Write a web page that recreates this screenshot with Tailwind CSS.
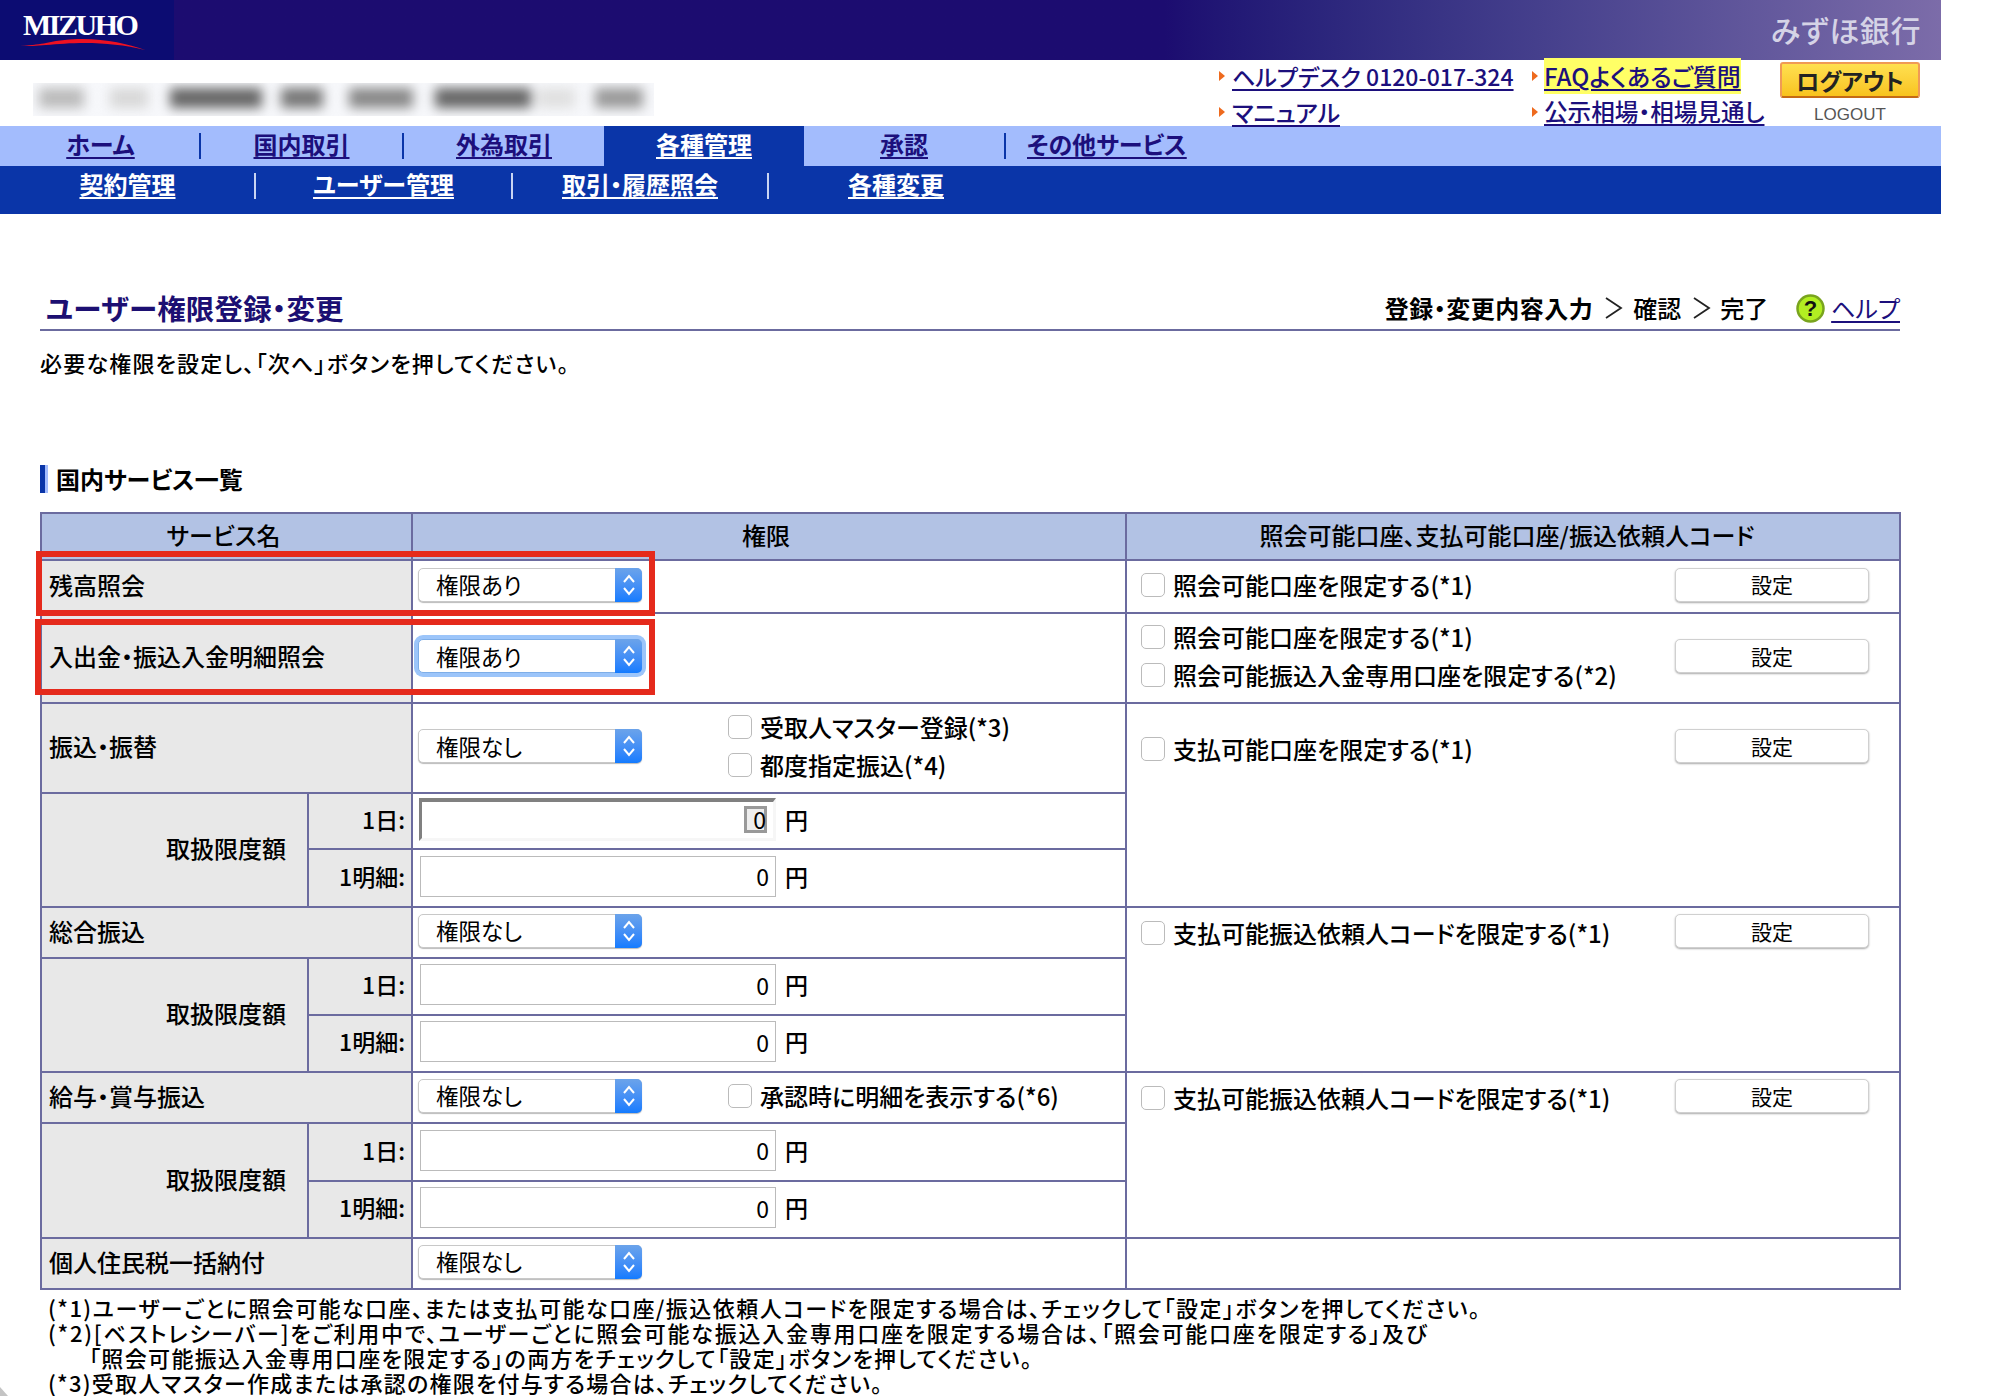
<!DOCTYPE html>
<html lang="ja">
<head>
<meta charset="UTF-8">
<title>ユーザー権限登録・変更</title>
<script src="https://cdn.jsdelivr.net/npm/@tailwindcss/browser@4"></script>
</head>
<body class="bg-white w-[1994px] h-[1396px] overflow-hidden relative font-['Noto_Sans_CJK_JP','Noto_Sans',sans-serif] [font-feature-settings:'palt'] text-[22px] text-[#000]">

<!-- header -->
<div class="w-[1941px] h-[60px] flex items-center bg-gradient-to-r from-[#1c0c70] from-60% to-[#7c6ca9]">
  <div class="w-[174px] h-[60px] bg-[#0c0c72] relative shrink-0">
    <span class="absolute left-[23px] top-[7px] font-['Liberation_Serif',serif] font-bold text-white text-[30px] leading-[36px] tracking-[-2.5px]">MIZUHO</span>
    <svg class="absolute left-[20px] top-[36px]" width="130" height="16" viewBox="0 0 130 16"><path d="M0 10 C14 9 20 8 26 7 C40 4 50 3 62 3 C88 3 108 8 125 14 C105 9 85 7 65 7 C50 7 38 8 26 9 C16 10 8 10 0 10Z" fill="#ee1122"/></svg>
  </div>
  <span class="ml-auto mr-[20px] pb-[2px] text-[30px] font-medium text-[#d5d3e6] tracking-[0.6px]">みずほ銀行</span>
</div>

<!-- sub header -->
<div class="w-[1941px] h-[66px] flex">
  <div class="ml-[33px] mt-[23px] w-[621px] h-[33px] bg-[#f7f8fb] relative overflow-hidden shrink-0">
    <div class="flex h-[20px] mt-[5px] blur-[6px]">
      <div class="ml-[6px] w-[45px] bg-[#bbb]"></div>
      <div class="ml-[26px] w-[38px] bg-[#d8d8d8]"></div>
      <div class="ml-[22px] w-[92px] bg-[#666]"></div>
      <div class="ml-[19px] w-[42px] bg-[#777]"></div>
      <div class="ml-[26px] w-[64px] bg-[#888]"></div>
      <div class="ml-[22px] w-[96px] bg-[#666]"></div>
      <div class="ml-[6px] w-[38px] bg-[#e0e0e0]"></div>
      <div class="ml-[20px] w-[48px] bg-[#999]"></div>
    </div>
  </div>
  <div class="ml-[565px] w-[313px] -mt-[2px] text-[24px] font-medium text-[#1c0f7c] shrink-0">
    <div class="h-[36px] flex items-center">
      <span class="w-0 h-0 border-y-[5px] border-y-transparent border-l-[6px] border-l-[#ee6a1e] mr-[7px]"></span>
      <a class="text-[23px] underline decoration-2 underline-offset-[3px]">ヘルプデスク 0120-017-324</a>
    </div>
    <div class="h-[36px] flex items-center">
      <span class="w-0 h-0 border-y-[5px] border-y-transparent border-l-[6px] border-l-[#ee6a1e] mr-[7px]"></span>
      <a class="underline decoration-2 underline-offset-[3px]">マニュアル</a>
    </div>
  </div>
  <div class="w-[248px] -mt-[2px] text-[24px] font-medium text-[#1c0f7c] shrink-0">
    <div class="h-[36px] flex items-center">
      <span class="w-0 h-0 border-y-[5px] border-y-transparent border-l-[6px] border-l-[#ee6a1e] mr-[6px]"></span>
      <a class="underline decoration-2 underline-offset-[3px] bg-[#ffff66]">FAQよくあるご質問</a>
    </div>
    <div class="h-[36px] flex items-center">
      <span class="w-0 h-0 border-y-[5px] border-y-transparent border-l-[6px] border-l-[#ee6a1e] mr-[6px]"></span>
      <a class="text-[23.6px] underline decoration-2 underline-offset-[3px]">公示相場・相場見通し</a>
    </div>
  </div>
  <div class="w-[140px] pt-[2px] shrink-0">
    <div class="w-[140px] h-[36px] border-2 border-[#f09a55] border-b-[#c56a15] rounded-[3px] bg-gradient-to-b from-[#ffe04f] to-[#f8c31c] flex items-center justify-center text-[23px] font-bold text-[#222] leading-none">ログアウト</div>
    <div class="text-center text-[17px] mt-[4px] text-[#555] font-['Liberation_Sans',sans-serif]">LOGOUT</div>
  </div>
</div>

<!-- nav -->
<div class="w-[1941px] h-[40px] flex bg-[#a3bcfd] text-[24px] font-bold text-[#1c0f7c] leading-none">
  <a class="w-[201px] pb-[5px] flex items-center justify-center"><span class="underline decoration-2 underline-offset-[3px]">ホーム</span></a>
  <span class="w-[2px] h-[26px] mt-[7px] bg-[#0a35a8] -ml-[2px]"></span>
  <a class="w-[201px] pb-[5px] flex items-center justify-center"><span class="underline decoration-2 underline-offset-[3px]">国内取引</span></a>
  <span class="w-[2px] h-[26px] mt-[7px] bg-[#0a35a8]"></span>
  <a class="w-[200px] pb-[5px] flex items-center justify-center"><span class="underline decoration-2 underline-offset-[3px]">外為取引</span></a>
  <a class="w-[200px] pb-[5px] flex items-center justify-center bg-[#0a35a8] text-white"><span class="underline decoration-2 underline-offset-[3px]">各種管理</span></a>
  <a class="w-[200px] pb-[5px] flex items-center justify-center"><span class="underline decoration-2 underline-offset-[3px]">承認</span></a>
  <span class="w-[2px] h-[26px] mt-[7px] bg-[#0a35a8]"></span>
  <a class="ml-[21px] pb-[5px] flex items-center"><span class="underline decoration-2 underline-offset-[3px]">その他サービス</span></a>
</div>
<div class="w-[1941px] h-[48px] flex bg-[#0a35a8] text-[24px] font-bold text-white leading-none">
  <a class="w-[255px] h-[36px] flex items-center justify-center"><span class="underline decoration-2 underline-offset-[3px]">契約管理</span></a>
  <span class="w-[2px] h-[26px] mt-[7px] bg-[#c9d4f2] -ml-[1px]"></span>
  <a class="w-[255px] h-[36px] flex items-center justify-center"><span class="underline decoration-2 underline-offset-[3px]">ユーザー管理</span></a>
  <span class="w-[2px] h-[26px] mt-[7px] bg-[#c9d4f2]"></span>
  <a class="w-[254px] h-[36px] flex items-center justify-center"><span class="underline decoration-2 underline-offset-[3px]">取引・履歴照会</span></a>
  <span class="w-[2px] h-[26px] mt-[7px] bg-[#c9d4f2]"></span>
  <a class="w-[254px] h-[36px] flex items-center justify-center"><span class="underline decoration-2 underline-offset-[3px]">各種変更</span></a>
</div>

<!-- content -->
<div class="ml-[40px] w-[1860px]">
  <div class="mt-[77px] h-[40px] border-b-2 border-[#6b6b9f] flex items-start">
    <h1 class="ml-[6px] text-[28.5px] leading-[34px] font-bold tracking-[0.2px] text-[#1c0f72]">ユーザー権限登録・変更</h1>
    <div class="ml-auto flex items-center h-[34px] text-[24px]">
      <span class="font-bold tracking-[0.5px]">登録・変更内容入力</span>
      <svg class="ml-[11px] mr-[10px]" width="19" height="24" viewBox="0 0 19 24" fill="none" stroke="#222" stroke-width="1.8"><path d="M2 2 L17 12 L2 22"/></svg>
      <span class="font-medium">確認</span>
      <svg class="ml-[11px] mr-[9px]" width="19" height="24" viewBox="0 0 19 24" fill="none" stroke="#222" stroke-width="1.8"><path d="M2 2 L17 12 L2 22"/></svg>
      <span class="font-medium">完了</span>
      <svg class="ml-[28px] mr-[6px]" width="29" height="29" viewBox="0 0 29 29"><circle cx="14.5" cy="14.5" r="13" fill="#b2ee22" stroke="#79a41e" stroke-width="2.5"/><text x="14.5" y="22" text-anchor="middle" font-size="22" font-weight="700" fill="#111" font-family="Liberation Sans">?</text></svg>
      <a class="text-[#1c0f7c] underline decoration-2 underline-offset-[3px]">ヘルプ</a>
    </div>
  </div>
  <p class="mt-[17px] text-[22px] leading-[28px] font-medium tracking-[1.2px]">必要な権限を設定し、「次へ」ボタンを押してください。</p>

  <div class="mt-[89px] h-[28px] flex items-center">
    <span class="w-[5px] h-[28px] bg-[#0a35a8]"></span>
    <span class="w-[3px] h-[28px] bg-[#a3bcfd]"></span>
    <h2 class="ml-[8px] text-[24px] font-bold">国内サービス一覧</h2>
  </div>

  <div class="relative mt-[19px]">
    <table class="w-[1859px] table-fixed border-collapse text-[24px] font-medium [&_td]:border-2 [&_td]:border-[#6b6b9f] [&_td]:pb-[4px] [&_th]:border-2 [&_th]:border-[#6b6b9f] [&_th]:pb-[3px]">
      <colgroup><col class="w-[267px]"><col class="w-[104px]"><col class="w-[714px]"><col class="w-[774px]"></colgroup>
      <tr class="h-[47px] bg-[#b2c2e4]">
        <th colspan="2" class="font-medium pr-[6px]">サービス名</th>
        <th class="font-medium pr-[6px]">権限</th>
        <th class="font-medium pr-[12px]">照会可能口座、支払可能口座/振込依頼人コード</th>
      </tr>
      <!-- 残高照会 -->
      <tr class="h-[53px]">
        <td colspan="2" class="bg-[#e8e8e8] pl-[7px]">残高照会</td>
        <td class="pl-[5px]">
          <div class="w-[224px] h-[34px] rounded-[5px] border border-[#c8c8c8] bg-white flex items-center relative shadow-[0_1px_1px_#bbb]"><span class="ml-[17px] text-[22.5px] font-normal leading-none">権限あり</span><span class="absolute -right-px -top-px w-[27px] h-[34px] rounded-r-[5px] bg-gradient-to-b from-[#6ba3ea] to-[#127bff] flex items-center justify-center"><svg width="14" height="24" viewBox="0 0 14 24" fill="none" stroke="#fff" stroke-width="2"><path d="M2 9 L7 3 L12 9M2 15 L7 21 L12 15"/></svg></span></div>
        </td>
        <td class="px-[14px]">
          <div class="flex items-center justify-between">
            <label class="flex items-center leading-none"><input type="checkbox" class="appearance-none w-[24px] h-[24px] rounded-[5px] border border-[#bbb] bg-white mr-[8px]">照会可能口座を限定する(*1)</label>
            <button class="w-[194px] h-[34px] mr-[16px] rounded-[5px] border border-[#d0d0d0] shadow-[0_1px_2px_#aaa] bg-white text-[21px] font-normal leading-none">設定</button>
          </div>
        </td>
      </tr>
      <!-- 入出金 -->
      <tr class="h-[90px]">
        <td colspan="2" class="bg-[#e8e8e8] pl-[7px]">入出金・振込入金明細照会</td>
        <td class="pl-[5px]">
          <div class="w-[224px] h-[34px] rounded-[5px] border border-[#7eaee8] bg-white flex items-center relative shadow-[0_0_0_4px_#9cc5fa]"><span class="ml-[17px] text-[22.5px] font-normal leading-none">権限あり</span><span class="absolute -right-px -top-px w-[27px] h-[34px] rounded-r-[5px] bg-gradient-to-b from-[#6ba3ea] to-[#127bff] flex items-center justify-center"><svg width="14" height="24" viewBox="0 0 14 24" fill="none" stroke="#fff" stroke-width="2"><path d="M2 9 L7 3 L12 9M2 15 L7 21 L12 15"/></svg></span></div>
        </td>
        <td class="px-[14px]">
          <div class="flex items-center justify-between">
            <div class="flex flex-col gap-[14px]">
              <label class="flex items-center leading-none"><input type="checkbox" class="appearance-none w-[24px] h-[24px] rounded-[5px] border border-[#bbb] bg-white mr-[8px]">照会可能口座を限定する(*1)</label>
              <label class="flex items-center leading-none"><input type="checkbox" class="appearance-none w-[24px] h-[24px] rounded-[5px] border border-[#bbb] bg-white mr-[8px]">照会可能振込入金専用口座を限定する(*2)</label>
            </div>
            <button class="w-[194px] h-[34px] mr-[16px] rounded-[5px] border border-[#d0d0d0] shadow-[0_1px_2px_#aaa] bg-white text-[21px] font-normal leading-none">設定</button>
          </div>
        </td>
      </tr>
      <!-- 振込・振替 -->
      <tr class="h-[90px]">
        <td colspan="2" class="bg-[#e8e8e8] pl-[7px]">振込・振替</td>
        <td class="pl-[5px]">
          <div class="flex items-center">
            <div class="w-[224px] h-[34px] rounded-[5px] border border-[#c8c8c8] bg-white flex items-center relative shadow-[0_1px_1px_#bbb]"><span class="ml-[17px] text-[22.5px] font-normal leading-none">権限なし</span><span class="absolute -right-px -top-px w-[27px] h-[34px] rounded-r-[5px] bg-gradient-to-b from-[#6ba3ea] to-[#127bff] flex items-center justify-center"><svg width="14" height="24" viewBox="0 0 14 24" fill="none" stroke="#fff" stroke-width="2"><path d="M2 9 L7 3 L12 9M2 15 L7 21 L12 15"/></svg></span></div>
            <div class="ml-[86px] flex flex-col gap-[14px]">
              <label class="flex items-center leading-none"><input type="checkbox" class="appearance-none w-[24px] h-[24px] rounded-[5px] border border-[#bbb] bg-white mr-[8px]">受取人マスター登録(*3)</label>
              <label class="flex items-center leading-none"><input type="checkbox" class="appearance-none w-[24px] h-[24px] rounded-[5px] border border-[#bbb] bg-white mr-[8px]">都度指定振込(*4)</label>
            </div>
          </div>
        </td>
        <td rowspan="3" class="px-[14px] pt-[25px] align-top">
          <div class="flex items-start justify-between">
            <label class="flex items-center leading-none mt-[8px]"><input type="checkbox" class="appearance-none w-[24px] h-[24px] rounded-[5px] border border-[#bbb] bg-white mr-[8px]">支払可能口座を限定する(*1)</label>
            <button class="w-[194px] h-[34px] mr-[16px] rounded-[5px] border border-[#d0d0d0] shadow-[0_1px_2px_#aaa] bg-white text-[21px] font-normal leading-none">設定</button>
          </div>
        </td>
      </tr>
      <tr class="h-[56px]">
        <td rowspan="2" class="bg-[#e8e8e8] text-right pr-[21px]">取扱限度額</td>
        <td class="bg-[#e8e8e8] text-right pr-[6px] text-[23px]">1日:</td>
        <td class="pl-[6px]">
          <div class="flex items-center">
            <div class="w-[357px] h-[43px] border-t-[4px] border-l-[3px] border-t-[#808080] border-l-[#808080] border-r-[3px] border-b-[3px] border-r-[#f6f6f6] border-b-[#f6f6f6] relative">
              <span class="absolute right-[6px] top-[4px] w-[23px] h-[27px] border-[3px] border-[#999] bg-[#eee]"></span>
              <span class="absolute right-[7px] top-0 h-[36px] flex items-center text-[23px] font-normal">0</span>
            </div>
            <span class="ml-[9px] text-[23px]">円</span>
          </div>
        </td>
      </tr>
      <tr class="h-[58px]">
        <td class="bg-[#e8e8e8] text-right pr-[6px] text-[23px]">1明細:</td>
        <td class="pl-[7px]">
          <div class="flex items-center"><input value="0" class="w-[356px] h-[41px] border border-[#bbb] text-right pr-[6px] text-[23px] font-normal"><span class="ml-[9px] text-[23px]">円</span></div>
        </td>
      </tr>
      <!-- 総合振込 -->
      <tr class="h-[51px]">
        <td colspan="2" class="bg-[#e8e8e8] pl-[7px]">総合振込</td>
        <td class="pl-[5px]">
          <div class="w-[224px] h-[34px] rounded-[5px] border border-[#c8c8c8] bg-white flex items-center relative shadow-[0_1px_1px_#bbb]"><span class="ml-[17px] text-[22.5px] font-normal leading-none">権限なし</span><span class="absolute -right-px -top-px w-[27px] h-[34px] rounded-r-[5px] bg-gradient-to-b from-[#6ba3ea] to-[#127bff] flex items-center justify-center"><svg width="14" height="24" viewBox="0 0 14 24" fill="none" stroke="#fff" stroke-width="2"><path d="M2 9 L7 3 L12 9M2 15 L7 21 L12 15"/></svg></span></div>
        </td>
        <td rowspan="3" class="px-[14px] pt-[6px] align-top">
          <div class="flex items-start justify-between">
            <label class="flex items-center leading-none mt-[7px]"><input type="checkbox" class="appearance-none w-[24px] h-[24px] rounded-[5px] border border-[#bbb] bg-white mr-[8px]">支払可能振込依頼人コードを限定する(*1)</label>
            <button class="w-[194px] h-[34px] mr-[16px] rounded-[5px] border border-[#d0d0d0] shadow-[0_1px_2px_#aaa] bg-white text-[21px] font-normal leading-none">設定</button>
          </div>
        </td>
      </tr>
      <tr class="h-[57px]">
        <td rowspan="2" class="bg-[#e8e8e8] text-right pr-[21px]">取扱限度額</td>
        <td class="bg-[#e8e8e8] text-right pr-[6px] text-[23px]">1日:</td>
        <td class="pl-[7px]">
          <div class="flex items-center"><input value="0" class="w-[356px] h-[41px] border border-[#bbb] text-right pr-[6px] text-[23px] font-normal"><span class="ml-[9px] text-[23px]">円</span></div>
        </td>
      </tr>
      <tr class="h-[57px]">
        <td class="bg-[#e8e8e8] text-right pr-[6px] text-[23px]">1明細:</td>
        <td class="pl-[7px]">
          <div class="flex items-center"><input value="0" class="w-[356px] h-[41px] border border-[#bbb] text-right pr-[6px] text-[23px] font-normal"><span class="ml-[9px] text-[23px]">円</span></div>
        </td>
      </tr>
      <!-- 給与・賞与振込 -->
      <tr class="h-[51px]">
        <td colspan="2" class="bg-[#e8e8e8] pl-[7px]">給与・賞与振込</td>
        <td class="pl-[5px]">
          <div class="flex items-center">
            <div class="w-[224px] h-[34px] rounded-[5px] border border-[#c8c8c8] bg-white flex items-center relative shadow-[0_1px_1px_#bbb]"><span class="ml-[17px] text-[22.5px] font-normal leading-none">権限なし</span><span class="absolute -right-px -top-px w-[27px] h-[34px] rounded-r-[5px] bg-gradient-to-b from-[#6ba3ea] to-[#127bff] flex items-center justify-center"><svg width="14" height="24" viewBox="0 0 14 24" fill="none" stroke="#fff" stroke-width="2"><path d="M2 9 L7 3 L12 9M2 15 L7 21 L12 15"/></svg></span></div>
            <label class="ml-[86px] flex items-center leading-none"><input type="checkbox" class="appearance-none w-[24px] h-[24px] rounded-[5px] border border-[#bbb] bg-white mr-[8px]">承認時に明細を表示する(*6)</label>
          </div>
        </td>
        <td rowspan="3" class="px-[14px] pt-[6px] align-top">
          <div class="flex items-start justify-between">
            <label class="flex items-center leading-none mt-[7px]"><input type="checkbox" class="appearance-none w-[24px] h-[24px] rounded-[5px] border border-[#bbb] bg-white mr-[8px]">支払可能振込依頼人コードを限定する(*1)</label>
            <button class="w-[194px] h-[34px] mr-[16px] rounded-[5px] border border-[#d0d0d0] shadow-[0_1px_2px_#aaa] bg-white text-[21px] font-normal leading-none">設定</button>
          </div>
        </td>
      </tr>
      <tr class="h-[58px]">
        <td rowspan="2" class="bg-[#e8e8e8] text-right pr-[21px]">取扱限度額</td>
        <td class="bg-[#e8e8e8] text-right pr-[6px] text-[23px]">1日:</td>
        <td class="pl-[7px]">
          <div class="flex items-center"><input value="0" class="w-[356px] h-[41px] border border-[#bbb] text-right pr-[6px] text-[23px] font-normal"><span class="ml-[9px] text-[23px]">円</span></div>
        </td>
      </tr>
      <tr class="h-[57px]">
        <td class="bg-[#e8e8e8] text-right pr-[6px] text-[23px]">1明細:</td>
        <td class="pl-[7px]">
          <div class="flex items-center"><input value="0" class="w-[356px] h-[41px] border border-[#bbb] text-right pr-[6px] text-[23px] font-normal"><span class="ml-[9px] text-[23px]">円</span></div>
        </td>
      </tr>
      <!-- 個人住民税 -->
      <tr class="h-[51px]">
        <td colspan="2" class="bg-[#e8e8e8] pl-[7px]">個人住民税一括納付</td>
        <td class="pl-[5px]">
          <div class="w-[224px] h-[34px] rounded-[5px] border border-[#c8c8c8] bg-white flex items-center relative shadow-[0_1px_1px_#bbb]"><span class="ml-[17px] text-[22.5px] font-normal leading-none">権限なし</span><span class="absolute -right-px -top-px w-[27px] h-[34px] rounded-r-[5px] bg-gradient-to-b from-[#6ba3ea] to-[#127bff] flex items-center justify-center"><svg width="14" height="24" viewBox="0 0 14 24" fill="none" stroke="#fff" stroke-width="2"><path d="M2 9 L7 3 L12 9M2 15 L7 21 L12 15"/></svg></span></div>
        </td>
        <td></td>
      </tr>
    </table>

    <!-- red annotation boxes -->
    <div class="absolute left-[-4px] top-[39px] w-[619px] h-[65px] border-[6px] border-[#e52a1c]"></div>
    <div class="absolute left-[-5px] top-[107px] w-[620px] h-[76px] border-[6px] border-[#e52a1c]"></div>
  </div>

  <div class="mt-[5px] ml-[8px] text-[22px] leading-[25px] font-medium whitespace-nowrap">
    <p class="tracking-[1.45px]">(*1)ユーザーごとに照会可能な口座、または支払可能な口座/振込依頼人コードを限定する場合は、チェックして「設定」ボタンを押してください。</p>
    <p class="tracking-[1.75px]">(*2)[ベストレシーバー]をご利用中で、ユーザーごとに照会可能な振込入金専用口座を限定する場合は、「照会可能口座を限定する」及び</p>
    <p class="pl-[41px] tracking-[1.35px]">「照会可能振込入金専用口座を限定する」の両方をチェックして「設定」ボタンを押してください。</p>
    <p class="tracking-[1.25px]">(*3)受取人マスター作成または承認の権限を付与する場合は、チェックしてください。</p>
  </div>
</div>

<!-- window corner -->
<svg class="absolute left-0 bottom-0" width="8" height="9" viewBox="0 0 8 9"><path d="M0 0 L8 9 L0 9Z" fill="#c4c4c4"/></svg>

</body>
</html>
